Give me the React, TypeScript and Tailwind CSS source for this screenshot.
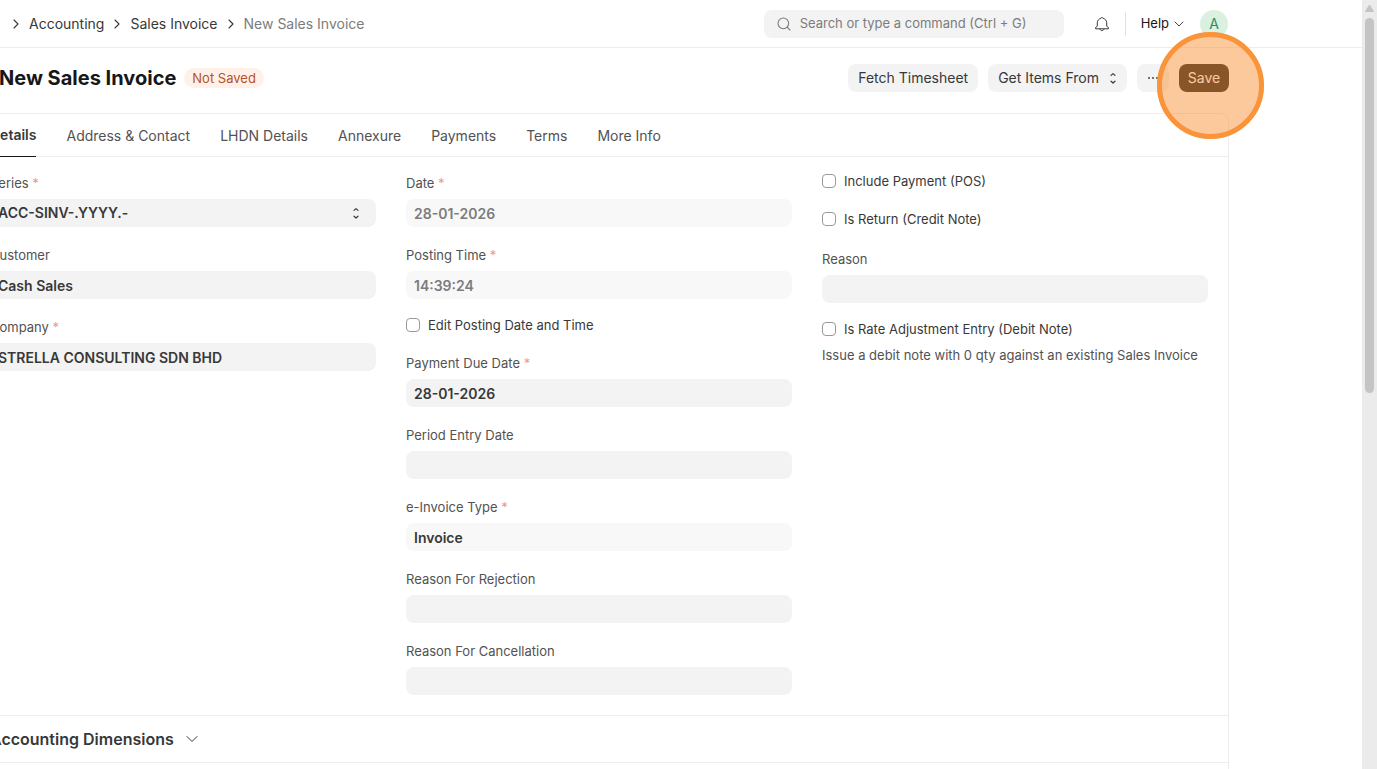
import { useId, useState } from 'react';
import type { ReactNode } from 'react';
import { ChevronDown, ChevronRight, Search } from 'lucide-react';
import clsx from 'clsx';

const tabs = ['Details', 'Address & Contact', 'LHDN Details', 'Annexure', 'Payments', 'Terms', 'More Info'];

const UpDown = ({ className }: { className?: string }) => (
  <svg
    viewBox="0 0 16 16"
    className={clsx('size-4', className)}
    fill="none"
    stroke="currentColor"
    strokeWidth="1.2"
    strokeLinecap="round"
    strokeLinejoin="round"
    aria-hidden="true"
  >
    <path d="M6 5.4 8 3.6l2 1.800M6 11.200 8 13l2-1.800" />
  </svg>
);

const BellIcon = () => (
  <svg viewBox="0 0 16 16" className="size-4" fill="none" stroke="currentColor" strokeLinejoin="round" aria-hidden="true">
    <path d="M8 1.500c-.6 0-.9.300-1.100.800C4.800 2.800 3.300 4.600 3.300 6.800v3.400L1.600 11.500v1.300h12.800v-1.300l-1.700-1.300V6.800c0-2.200-1.500-4-3.600-4.500C8.900 1.800 8.600 1.500 8 1.500z" />
    <path d="M6 13c.2 1 1 1.600 2 1.600s1.800-.6 2-1.600" strokeLinecap="round" />
  </svg>
);

const Label = ({ id, required, children }: { id: string; required?: boolean; children: ReactNode }) => (
  <label htmlFor={id} className="mb-1 block text-[13px] leading-6 text-[#525252]">
    {children}
    {required && <span className="text-[#e79a9a]"> *</span>}
  </label>
);

type FieldProps = {
  label: string;
  value?: string;
  required?: boolean;
  disabled?: boolean;
  readOnly?: boolean;
};

const Field = ({ label, value = '', required, disabled, readOnly }: FieldProps) => {
  const id = useId();
  return (
    <div>
      <Label id={id} required={required}>{label}</Label>
      <input
        id={id}
        type="text"
        defaultValue={value}
        disabled={disabled}
        readOnly={readOnly}
        className={clsx(
          'block h-7 w-full rounded-lg px-2 text-sm font-semibold outline-none',
          disabled || readOnly ? 'bg-[#f8f8f8]' : 'bg-[#f3f3f3]',
          disabled ? 'text-[#7c7c7c]' : 'text-[#383838]',
        )}
      />
    </div>
  );
};

const SelectField = ({ label, options }: { label: string; options: string[] }) => {
  const id = useId();
  return (
    <div>
      <Label id={id} required>{label}</Label>
      <div className="relative">
        <select
          id={id}
          className="block h-7 w-full appearance-none rounded-lg bg-[#f3f3f3] px-2 text-sm font-semibold text-[#383838] outline-none"
        >
          {options.map((o) => <option key={o}>{o}</option>)}
        </select>
        <UpDown className="pointer-events-none absolute top-1.5 right-3 text-[#383838]" />
      </div>
    </div>
  );
};

const Check = ({ label, help }: { label: string; help?: string }) => (
  <div>
    <label className="flex items-center gap-2 text-[13px] leading-5 text-[#383838]">
      <input type="checkbox" className="size-3.5 appearance-none rounded border border-[#999999] bg-white checked:bg-[#171717]" />
      {label}
    </label>
    {help && <p className="mt-1.5 text-[13px] leading-5 text-[#525252]">{help}</p>}
  </div>
);

const Header = () => (
  <header className="flex h-12 items-center justify-between border-b border-[#ededed] pr-[134px] pl-2">
    <nav aria-label="Breadcrumb" className="flex items-center gap-[5px] text-sm text-[#383838]">
      <ChevronRight className="size-4" strokeWidth={1.6} />
      <a href="#accounting">Accounting</a>
      <ChevronRight className="size-4" strokeWidth={1.6} />
      <a href="#sales-invoice">Sales Invoice</a>
      <ChevronRight className="size-4" strokeWidth={1.6} />
      <a href="#new" className="text-[#7c7c7c]">New Sales Invoice</a>
    </nav>

    <div className="flex items-center">
      <label className="flex h-7 w-[300px] items-center gap-2 rounded-lg bg-[#f3f3f3] px-3 text-[#7c7c7c]">
        <Search className="size-4" strokeWidth={1.6} />
        <input
          type="search"
          aria-label="Search"
          placeholder="Search or type a command (Ctrl + G)"
          className="min-w-0 flex-1 bg-transparent text-[13px] outline-none placeholder:text-[#7c7c7c]"
        />
      </label>
      <button type="button" aria-label="Notifications" className="ml-[30px] text-[#383838]">
        <BellIcon />
      </button>
      <div className="ml-[15px] h-6 w-px bg-[#e2e2e2]" />
      <button type="button" className="ml-[15px] flex items-center gap-0.5 text-[13px] text-[#171717]">
        Help
        <ChevronDown className="size-4" strokeWidth={1.2} />
      </button>
      <button type="button" className="ml-[13px] size-7 rounded-full bg-[#daf0e1] text-sm text-[#278f5e]">A</button>
    </div>
  </header>
);

const PageHead = () => (
  <div className="flex h-[65px] items-center justify-between pb-1.5 pl-[30px]">
    <div className="flex items-center gap-2">
      <h1 className="text-xl font-bold text-[#171717]">New Sales Invoice</h1>
      <span className="rounded-full bg-[#fff1e7] px-2 text-[13px] leading-5 text-[#b5532b]">Not Saved</span>
    </div>
    <div className="flex items-center gap-2.5 text-sm text-[#383838]">
      <button type="button" className="h-7 rounded-lg bg-[#f3f3f3] px-2.5">Fetch Timesheet</button>
      <button type="button" className="flex h-7 items-center gap-1.5 rounded-lg bg-[#f3f3f3] pr-1.5 pl-2.5">
        Get Items From
        <UpDown />
      </button>
      <button type="button" aria-label="More actions" className="flex h-7 w-8 items-center justify-center rounded-lg bg-[#f3f3f3]">
        <svg viewBox="0 0 16 16" className="size-4" fill="currentColor" aria-hidden="true">
          <circle cx="4" cy="8" r="0.9" />
          <circle cx="8" cy="8" r="0.9" />
          <circle cx="12" cy="8" r="0.9" />
        </svg>
      </button>
      <div className="relative">
        <button type="button" className="h-7 w-[50px] rounded-lg bg-[#171717] text-white">Save</button>
        {/* click highlight */}
        <span className="pointer-events-none absolute -top-8 -left-[22px] size-[107px] rounded-full bg-[#f9943b]/50 outline-5 -outline-offset-5 outline-[#f9943b]" />
      </div>
    </div>
  </div>
);

const Scrollbar = () => (
  <div aria-hidden="true" className="flex h-full w-[15px] shrink-0 flex-col items-center bg-[#ebebeb] pt-1">
    <svg viewBox="0 0 9 9" className="size-[9px] shrink-0" fill="#c4c4c4">
      <path d="M4.5 1 8.5 7.5H.5z" stroke="#c4c4c4" strokeLinejoin="round" />
    </svg>
    <div className="mt-[5px] h-[49%] w-[9px] rounded-full bg-[#c4c4c4]" />
  </div>
);

export default function App() {
  const [active, setActive] = useState('Details');

  return (
    <div className="flex h-screen overflow-hidden bg-white font-['Inter','Noto_Sans',sans-serif]">
      <div className="min-w-0 flex-1 overflow-hidden">
        <Header />
        <main className="mr-[133px] -ml-[31px]">
          <PageHead />
          <div className="rounded-t-lg border border-[#ededed]">
            <div role="tablist" className="flex h-[43px] gap-[30px] border-b border-[#ededed] px-5 text-sm">
              {tabs.map((tab) => (
                <button
                  key={tab}
                  type="button"
                  role="tab"
                  aria-selected={tab === active}
                  onClick={() => setActive(tab)}
                  className={clsx(
                    '-mb-px border-b',
                    tab === active
                      ? 'border-[#171717] font-semibold text-[#383838]'
                      : 'border-transparent pt-0.5 text-[#525252]',
                  )}
                >
                  {tab}
                </button>
              ))}
            </div>

            <form className="grid grid-cols-3 items-start gap-[30px] border-b border-[#ededed] px-5 pt-3.5 pb-5">
              <div className="flex flex-col gap-4">
                <SelectField label="Series" options={['ACC-SINV-.YYYY.-']} />
                <Field label="Customer" value="Cash Sales" />
                <Field label="Company" value="STRELLA CONSULTING SDN BHD" required />
              </div>

              <div className="flex flex-col gap-4">
                <Field label="Date" value="28-01-2026" required disabled />
                <Field label="Posting Time" value="14:39:24" required disabled />
                <Check label="Edit Posting Date and Time" />
                <Field label="Payment Due Date" value="28-01-2026" required />
                <Field label="Period Entry Date" />
                <Field label="e-Invoice Type" value="Invoice" required readOnly />
                <Field label="Reason For Rejection" />
                <Field label="Reason For Cancellation" />
              </div>

              <div className="flex flex-col gap-4">
                <div className="flex flex-col gap-[18px]">
                  <Check label="Include Payment (POS)" />
                  <Check label="Is Return (Credit Note)" />
                  <Field label="Reason" />
                </div>
                <Check
                  label="Is Rate Adjustment Entry (Debit Note)"
                  help="Issue a debit note with 0 qty against an existing Sales Invoice"
                />
              </div>
            </form>

            <button
              type="button"
              className="flex h-[47px] w-full items-center gap-2 border-b border-[#ededed] px-5 text-base font-semibold text-[#383838]"
            >
              Accounting Dimensions
              <ChevronDown className="size-5" strokeWidth={1.2} />
            </button>
            <div className="h-12" />
          </div>
        </main>
      </div>
      <Scrollbar />
    </div>
  );
}
